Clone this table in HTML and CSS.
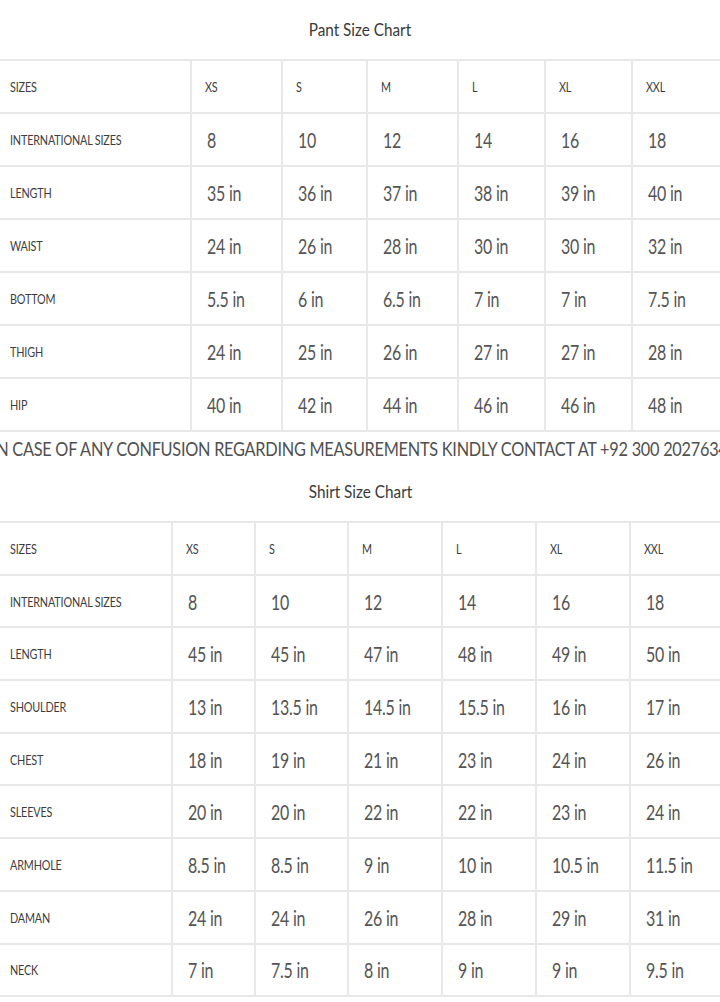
FILE: index.html
```html
<!DOCTYPE html>
<html>
<head>
<meta charset="utf-8">
<link rel="stylesheet" href="styles.css">
</head>
<body>
<div class="page">
  <div class="title title-pant"><span class="t">Pant Size Chart</span></div>
  <table class="chart pant">
    <colgroup><col style="width:192px"><col style="width:91px"><col style="width:85px"><col style="width:91px"><col style="width:87px"><col style="width:87px"><col style="width:90px"></colgroup>
    <tr class="head"><td><span class="lb">SIZES</span></td><td><span class="lb">XS</span></td><td><span class="lb">S</span></td><td><span class="lb">M</span></td><td><span class="lb">L</span></td><td><span class="lb">XL</span></td><td><span class="lb">XXL</span></td></tr>
    <tr><td><span class="lb">INTERNATIONAL SIZES</span></td><td><span class="v">8</span></td><td><span class="v">10</span></td><td><span class="v">12</span></td><td><span class="v">14</span></td><td><span class="v">16</span></td><td><span class="v">18</span></td></tr>
    <tr><td><span class="lb">LENGTH</span></td><td><span class="v">35 in</span></td><td><span class="v">36 in</span></td><td><span class="v">37 in</span></td><td><span class="v">38 in</span></td><td><span class="v">39 in</span></td><td><span class="v">40 in</span></td></tr>
    <tr><td><span class="lb">WAIST</span></td><td><span class="v">24 in</span></td><td><span class="v">26 in</span></td><td><span class="v">28 in</span></td><td><span class="v">30 in</span></td><td><span class="v">30 in</span></td><td><span class="v">32 in</span></td></tr>
    <tr><td><span class="lb">BOTTOM</span></td><td><span class="v">5.5 in</span></td><td><span class="v">6 in</span></td><td><span class="v">6.5 in</span></td><td><span class="v">7 in</span></td><td><span class="v">7 in</span></td><td><span class="v">7.5 in</span></td></tr>
    <tr><td><span class="lb">THIGH</span></td><td><span class="v">24 in</span></td><td><span class="v">25 in</span></td><td><span class="v">26 in</span></td><td><span class="v">27 in</span></td><td><span class="v">27 in</span></td><td><span class="v">28 in</span></td></tr>
    <tr><td><span class="lb">HIP</span></td><td><span class="v">40 in</span></td><td><span class="v">42 in</span></td><td><span class="v">44 in</span></td><td><span class="v">46 in</span></td><td><span class="v">46 in</span></td><td><span class="v">48 in</span></td></tr>
  </table>
  <div class="note"><span class="n">IN CASE OF ANY CONFUSION REGARDING MEASUREMENTS KINDLY CONTACT AT +92 300 2027634</span></div>
  <div class="title title-shirt"><span class="t">Shirt Size Chart</span></div>
  <table class="chart shirt">
    <colgroup><col style="width:173px"><col style="width:83px"><col style="width:93px"><col style="width:94px"><col style="width:94px"><col style="width:94px"><col style="width:92px"></colgroup>
    <tr class="head"><td><span class="lb">SIZES</span></td><td><span class="lb">XS</span></td><td><span class="lb">S</span></td><td><span class="lb">M</span></td><td><span class="lb">L</span></td><td><span class="lb">XL</span></td><td><span class="lb">XXL</span></td></tr>
    <tr><td><span class="lb">INTERNATIONAL SIZES</span></td><td><span class="v">8</span></td><td><span class="v">10</span></td><td><span class="v">12</span></td><td><span class="v">14</span></td><td><span class="v">16</span></td><td><span class="v">18</span></td></tr>
    <tr><td><span class="lb">LENGTH</span></td><td><span class="v">45 in</span></td><td><span class="v">45 in</span></td><td><span class="v">47 in</span></td><td><span class="v">48 in</span></td><td><span class="v">49 in</span></td><td><span class="v">50 in</span></td></tr>
    <tr><td><span class="lb">SHOULDER</span></td><td><span class="v">13 in</span></td><td><span class="v">13.5 in</span></td><td><span class="v">14.5 in</span></td><td><span class="v">15.5 in</span></td><td><span class="v">16 in</span></td><td><span class="v">17 in</span></td></tr>
    <tr><td><span class="lb">CHEST</span></td><td><span class="v">18 in</span></td><td><span class="v">19 in</span></td><td><span class="v">21 in</span></td><td><span class="v">23 in</span></td><td><span class="v">24 in</span></td><td><span class="v">26 in</span></td></tr>
    <tr><td><span class="lb">SLEEVES</span></td><td><span class="v">20 in</span></td><td><span class="v">20 in</span></td><td><span class="v">22 in</span></td><td><span class="v">22 in</span></td><td><span class="v">23 in</span></td><td><span class="v">24 in</span></td></tr>
    <tr><td><span class="lb">ARMHOLE</span></td><td><span class="v">8.5 in</span></td><td><span class="v">8.5 in</span></td><td><span class="v">9 in</span></td><td><span class="v">10 in</span></td><td><span class="v">10.5 in</span></td><td><span class="v">11.5 in</span></td></tr>
    <tr><td><span class="lb">DAMAN</span></td><td><span class="v">24 in</span></td><td><span class="v">24 in</span></td><td><span class="v">26 in</span></td><td><span class="v">28 in</span></td><td><span class="v">29 in</span></td><td><span class="v">31 in</span></td></tr>
    <tr><td><span class="lb">NECK</span></td><td><span class="v">7 in</span></td><td><span class="v">7.5 in</span></td><td><span class="v">8 in</span></td><td><span class="v">9 in</span></td><td><span class="v">9 in</span></td><td><span class="v">9.5 in</span></td></tr>
  </table>
</div>
</body>
</html>
```

FILE: styles.css
```css
html, body {
  margin: 0;
  padding: 0;
  background: #ffffff;
}
body {
  width: 720px;
  height: 1002px;
  overflow: hidden;
  font-family: Lato, "Open Sans", "Liberation Sans", sans-serif;
  color: #444444;
}
.page {
  width: 720px;
  overflow: hidden;
}
.title {
  display: flex;
  justify-content: center;
  align-items: center;
}
.title-pant {
  height: 59px;
}
.title-shirt {
  height: 55px;
  padding-bottom: 2px;
}
.t {
  display: inline-block;
  font-size: 17px;
  color: #3a3a3a;
  transform: scaleX(0.9);
  white-space: nowrap;
}
.chart {
  border-collapse: collapse;
  table-layout: fixed;
  width: 722px;
  margin-left: -1px;
}
.chart td {
  border: 2px solid #e8e8e8;
  padding: 0 0 0 13px;
  vertical-align: middle;
  white-space: nowrap;
  overflow: visible;
}
.chart td:first-child {
  border-left: none;
  padding-left: 11px;
}
.pant tr {
  height: 53px;
}
.shirt tr {
  height: 52.7px;
}
.lb {
  display: inline-block;
  font-size: 13.5px;
  color: #3d3d3d;
  transform: scaleX(0.8);
  transform-origin: left center;
  letter-spacing: -0.2px;
  position: relative;
  top: -1px;
}
.v {
  display: inline-block;
  font-size: 21px;
  font-weight: 400;
  color: #555555;
  transform: scaleX(0.76);
  transform-origin: left center;
  letter-spacing: -0.3px;
  margin-left: 2px;
}
.note {
  height: 32px;
  display: flex;
  justify-content: center;
  align-items: center;
  overflow: visible;
}
.n {
  display: inline-block;
  flex: none;
  white-space: nowrap;
  font-size: 19px;
  font-weight: 400;
  color: #505050;
  transform: scaleX(0.858);
  letter-spacing: -0.3px;
}
```
